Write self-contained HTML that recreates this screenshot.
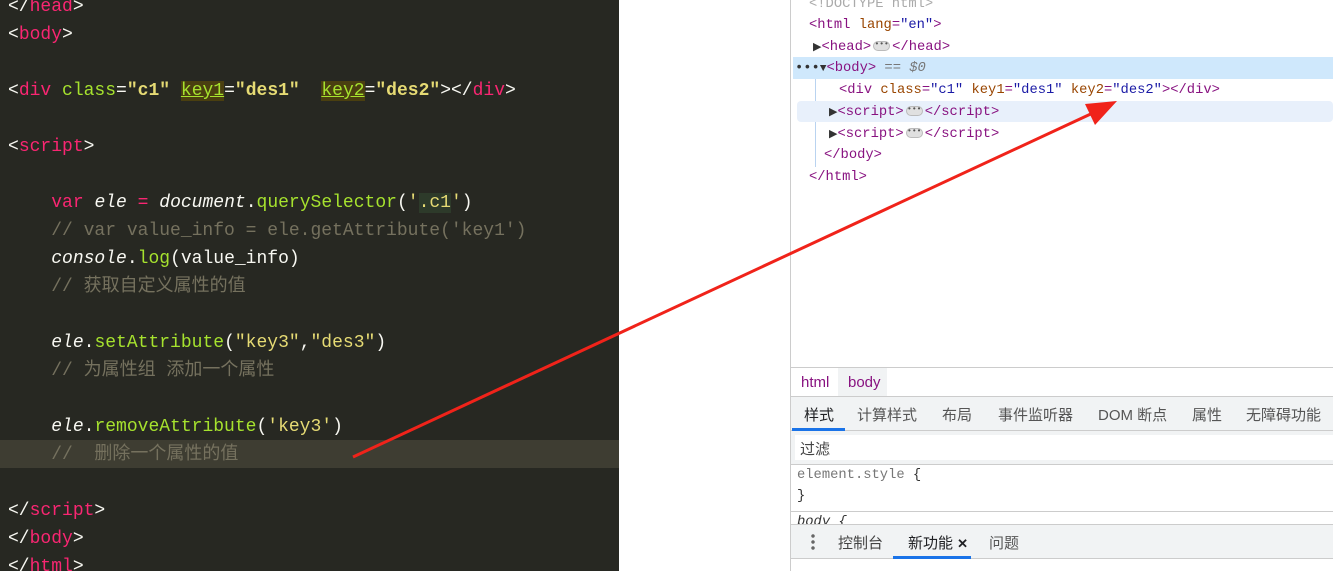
<!DOCTYPE html>
<html><head><meta charset="utf-8"><style>
*{margin:0;padding:0;box-sizing:border-box}
body{width:1333px;height:571px;overflow:hidden;background:#fff;position:relative;font-family:"Liberation Sans","Noto Sans CJK SC",sans-serif}
#ed{position:absolute;left:0;top:0;width:619px;height:571px;background:#272822;font-family:"Liberation Mono","Noto Sans CJK SC",monospace;font-size:18px;color:#f8f8f2}
#ed .l{position:absolute;left:8px;height:28px;line-height:28px;white-space:pre}
.t{color:#f92672}.a{color:#a6e22e}.s{color:#e6db74;font-weight:bold}.c{color:#75715e}.i{font-style:italic}.sv{color:#e6db74}
.hk{background:#4a3f10;text-decoration:underline}
#dv{position:absolute;left:790px;top:0;width:543px;height:571px;border-left:1px solid #ccc;font-family:"Liberation Mono",monospace;font-size:13.8px}
#dv .r{position:absolute;left:0;right:0;height:22px;line-height:22px;white-space:pre}
.tg{color:#881280}.an{color:#994500}.av{color:#1a1aa6}
.el{display:inline-block;width:17px;height:10px;border-radius:5px;background:#e0e0e0;border:1px solid #bbb;vertical-align:middle;font-size:8px;line-height:6px;text-align:center;color:#555;margin:0 2px}
.tri{font-size:11px;color:#333}
.ui{font-family:"Liberation Sans","Noto Sans CJK SC",sans-serif;font-size:15px;color:#333}
</style></head><body>
<div id="ed">
<div class="l" style="top:-7px">&lt;/<span class="t">head</span>&gt;</div>
<div class="l" style="top:21px">&lt;<span class="t">body</span>&gt;</div>
<div class="l" style="top:77px">&lt;<span class="t">div</span> <span class="a">class</span>=<span class="s">"c1"</span> <span class="a hk">key1</span>=<span class="s">"des1"</span>  <span class="a hk">key2</span>=<span class="s">"des2"</span>&gt;&lt;/<span class="t">div</span>&gt;</div>
<div class="l" style="top:133px">&lt;<span class="t">script</span>&gt;</div>
<div class="l" style="top:189px">    <span class="t">var</span> <span class="i">ele</span> <span class="t">=</span> <span class="i">document</span>.<span class="a">querySelector</span>(<span class="sv">'<span style="background:#2d3a2a">.c1</span>'</span>)</div>
<div class="l c" style="top:217px">    // var value_info = ele.getAttribute('key1')</div>
<div class="l" style="top:245px">    <span class="i">console</span>.<span class="a">log</span>(value_info)</div>
<div class="l c" style="top:273px">    // 获取自定义属性的值</div>
<div class="l" style="top:329px">    <span class="i">ele</span>.<span class="a">setAttribute</span>(<span class="sv">"key3"</span>,<span class="sv">"des3"</span>)</div>
<div class="l c" style="top:357px">    // 为属性组 添加一个属性</div>
<div class="l" style="top:413px">    <span class="i">ele</span>.<span class="a">removeAttribute</span>(<span class="sv">'key3'</span>)</div>
<div style="position:absolute;left:0;top:440px;width:619px;height:28px;background:#3e3d32"></div>
<div class="l c" style="top:441px">    //  删除一个属性的值</div>
<div class="l" style="top:497px">&lt;/<span class="t">script</span>&gt;</div>
<div class="l" style="top:525px">&lt;/<span class="t">body</span>&gt;</div>
<div class="l" style="top:553px">&lt;/<span class="t">html</span>&gt;</div>
</div>
<div id="dv">
<div class="r" style="top:-6px;left:18px;color:#aaa">&lt;!DOCTYPE html&gt;</div>
<div class="r" style="top:15px;left:18px"><span class="tg">&lt;html </span><span class="an">lang</span><span class="tg">=</span><span class="av">"en"</span><span class="tg">&gt;</span></div>
<div class="r" style="top:37px;left:22px"><span class="tri">▶</span><span class="tg">&lt;head&gt;</span><span class="el">•••</span><span class="tg">&lt;/head&gt;</span></div>
<div style="position:absolute;left:2px;right:0;top:57px;height:22px;background:#cfe8fc"></div>
<div class="r" style="top:58px;left:4px"><span style="color:#333">•••</span><span class="tri">▼</span><span class="tg">&lt;body&gt;</span><span style="color:#777;font-style:italic"> == $0</span></div>
<div style="position:absolute;left:24px;top:79px;width:1px;height:88px;background:#b9d3f0"></div>
<div class="r" style="top:80px;left:48px"><span class="tg">&lt;div </span><span class="an">class</span><span class="tg">=</span><span class="av">"c1"</span> <span class="an">key1</span><span class="tg">=</span><span class="av">"des1"</span> <span class="an">key2</span><span class="tg">=</span><span class="av">"des2"</span><span class="tg">&gt;&lt;/div&gt;</span></div>
<div style="position:absolute;left:6px;right:0;top:101px;height:21px;background:#e8f0fb;border-radius:4px"></div>
<div class="r" style="top:102px;left:38px"><span class="tri">▶</span><span class="tg">&lt;script&gt;</span><span class="el">•••</span><span class="tg">&lt;/script&gt;</span></div>
<div class="r" style="top:124px;left:38px"><span class="tri">▶</span><span class="tg">&lt;script&gt;</span><span class="el">•••</span><span class="tg">&lt;/script&gt;</span></div>
<div class="r" style="top:145px;left:33px"><span class="tg">&lt;/body&gt;</span></div>
<div class="r" style="top:167px;left:18px"><span class="tg">&lt;/html&gt;</span></div>

<div style="position:absolute;left:0;right:0;top:367px;height:30px;border-top:1px solid #ccc;border-bottom:1px solid #ccc"></div>
<div class="ui" style="position:absolute;left:10px;top:374px;color:#881280">html</div>
<div style="position:absolute;left:47px;top:368px;width:49px;height:28px;background:#f1f3f4"></div>
<div class="ui" style="position:absolute;left:57px;top:374px;color:#881280">body</div>
<div style="position:absolute;left:0;right:0;top:397px;height:34px;background:#f1f3f4;border-bottom:1px solid #ccc"></div>
<div class="ui" style="position:absolute;top:404px;left:13px;color:#202124">样式</div>
<div style="position:absolute;left:1px;top:428px;width:53px;height:3px;background:#1a73e8"></div>
<div class="ui" style="position:absolute;top:404px;left:66px;color:#555">计算样式</div>
<div class="ui" style="position:absolute;top:404px;left:151px;color:#555">布局</div>
<div class="ui" style="position:absolute;top:404px;left:207px;color:#555">事件监听器</div>
<div class="ui" style="position:absolute;top:404px;left:307px;color:#555">DOM 断点</div>
<div class="ui" style="position:absolute;top:404px;left:401px;color:#555">属性</div>
<div class="ui" style="position:absolute;top:404px;left:455px;color:#555">无障碍功能</div>
<div style="position:absolute;left:0;right:0;top:431px;height:34px;background:#f1f3f4;border-bottom:1px solid #ccc"></div>
<div style="position:absolute;left:4px;right:0;top:435px;height:25px;background:#fff"></div>
<div class="ui" style="position:absolute;top:438px;left:9px;color:#444">过滤</div>
<div class="r" style="top:465px;left:6px;color:#777">element.style <span style="color:#333">{</span></div>
<div class="r" style="top:486px;left:6px;color:#333">}</div>
<div style="position:absolute;left:0;right:0;top:511px;height:1px;background:#ccc"></div>
<div style="position:absolute;left:0;right:0;top:512px;height:12px;overflow:hidden"><div class="r" style="top:0;left:6px;font-style:italic;color:#333">body {</div></div>
<div style="position:absolute;left:0;right:0;top:524px;height:35px;background:#f1f3f4;border-top:1px solid #ccc;border-bottom:1px solid #ccc"></div>
<div style="position:absolute;left:20px;top:533px;width:4px;height:17px;background:radial-gradient(circle,#666 1.5px,transparent 2px) 0 0/4px 6px repeat-y"></div>
<div class="ui" style="position:absolute;top:532px;left:47px;color:#444">控制台</div>
<div class="ui" style="position:absolute;top:532px;left:117px;color:#202124">新功能 <b style="font-size:13px">✕</b></div>
<div style="position:absolute;left:102px;top:556px;width:78px;height:3px;background:#1a73e8"></div>
<div class="ui" style="position:absolute;top:532px;left:198px;color:#555">问题</div>
</div>
<svg style="position:absolute;left:0;top:0" width="1333" height="571"><line x1="353" y1="457" x2="1095" y2="112" stroke="#f0231a" stroke-width="3"/><polygon points="1117,101 1085,104 1095,125" fill="#f0231a"/></svg>
</body></html>
